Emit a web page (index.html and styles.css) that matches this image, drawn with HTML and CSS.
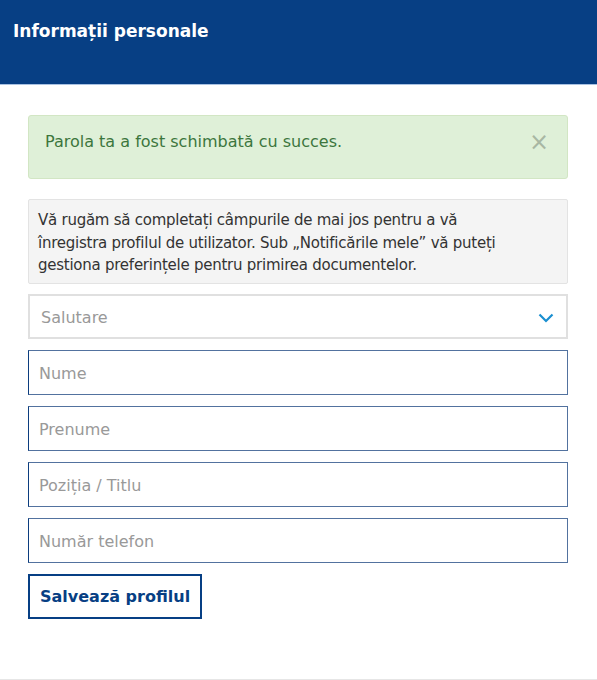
FILE: index.html
```html
<!DOCTYPE html>
<html lang="ro">
<head>
  <meta charset="UTF-8">
  <meta name="viewport" content="width=device-width, initial-scale=1.0">
  <title>Informații personale</title>
  <link rel="stylesheet" href="styles.css">
</head>
<body>
    <header class="page-header">
        <h1>Informații personale</h1>
    </header>

    <main class="content">
        <div class="alert-success">
            <span>Parola ta a fost schimbată cu succes.</span>
            <span class="alert-close">&times;</span>
        </div>

        <div class="info-box">
            Vă rugăm să completați câmpurile de mai jos pentru a vă înregistra profilul de utilizator. Sub „Notificările mele” vă puteți gestiona preferințele pentru primirea documentelor.
        </div>

        <form class="profile-form">
            <div class="select-field">
                <span>Salutare</span>
                <svg width="16" height="10" viewBox="0 0 16 10">
                    <path d="M1.5 1.5 L8 8 L14.5 1.5" fill="none" stroke="#1a8fd0" stroke-width="2.2"/>
                </svg>
            </div>
            <input class="text-field" type="text" placeholder="Nume">
            <input class="text-field" type="text" placeholder="Prenume">
            <input class="text-field" type="text" placeholder="Poziția / Titlu">
            <input class="text-field" type="text" placeholder="Număr telefon">
            <button class="save-btn" type="button">Salvează profilul</button>
        </form>
    </main>
</body>
</html>
```

FILE: styles.css
```css
* {
  margin: 0;
  padding: 0;
  box-sizing: border-box;
}

body {
  font-family: "DejaVu Sans", Verdana, sans-serif;
  background: #fff;
  color: #333;
  min-height: 680px;
  border-bottom: 1px solid #e6e6e6;
}

.page-header {
  background: #073f84;
  height: 85px;
  padding: 21px 13px 0;
  border-bottom: 1px solid #a9c2e2;
}

.page-header h1 {
  color: #fff;
  font-size: 17px;
  font-weight: bold;
  line-height: 20px;
}

.content {
  padding: 30px 29px 0 28px;
}

/* success message */
.alert-success {
  display: flex;
  justify-content: space-between;
  align-items: flex-start;
  height: 64px;
  padding: 15px 16px 0;
  background: #dff0d8;
  border: 1px solid #d2e6c4;
  border-radius: 3px;
  color: #3c763d;
  font-size: 16px;
  line-height: 22px;
  margin-bottom: 20px;
}

.alert-close {
  color: #a8b7a3;
  font-size: 24px;
  margin-right: 2px;
}

/* intro text */
.info-box {
  background: #f4f4f4;
  border: 1px solid #e3e3e3;
  border-radius: 2px;
  padding: 9px 40px 6px 9px;
  font-size: 15px;
  letter-spacing: -0.25px;
  line-height: 22.5px;
  color: #333;
  margin-bottom: 10px;
}

.profile-form {
  display: flex;
  flex-direction: column;
  gap: 11px;
}

.select-field {
  display: flex;
  justify-content: space-between;
  align-items: center;
  height: 45px;
  padding: 3px 12px 0 11px;
  border: 2px solid #e0e0e0;
  color: #999;
  font-size: 16px;
}

.text-field {
  height: 45px;
  padding: 3px 10px 0;
  border: 1px solid #52729f;
  border-left-color: #0c3d7e;
  font-family: inherit;
  font-size: 16px;
  color: #333;
  outline: none;
}

.text-field::placeholder {
  color: #999;
}

.save-btn {
  align-self: flex-start;
  height: 45px;
  padding: 0 10px;
  background: #fff;
  border: 2px solid #073f84;
  color: #073f84;
  font-family: inherit;
  font-size: 16px;
  font-weight: bold;
  cursor: pointer;
}
```
